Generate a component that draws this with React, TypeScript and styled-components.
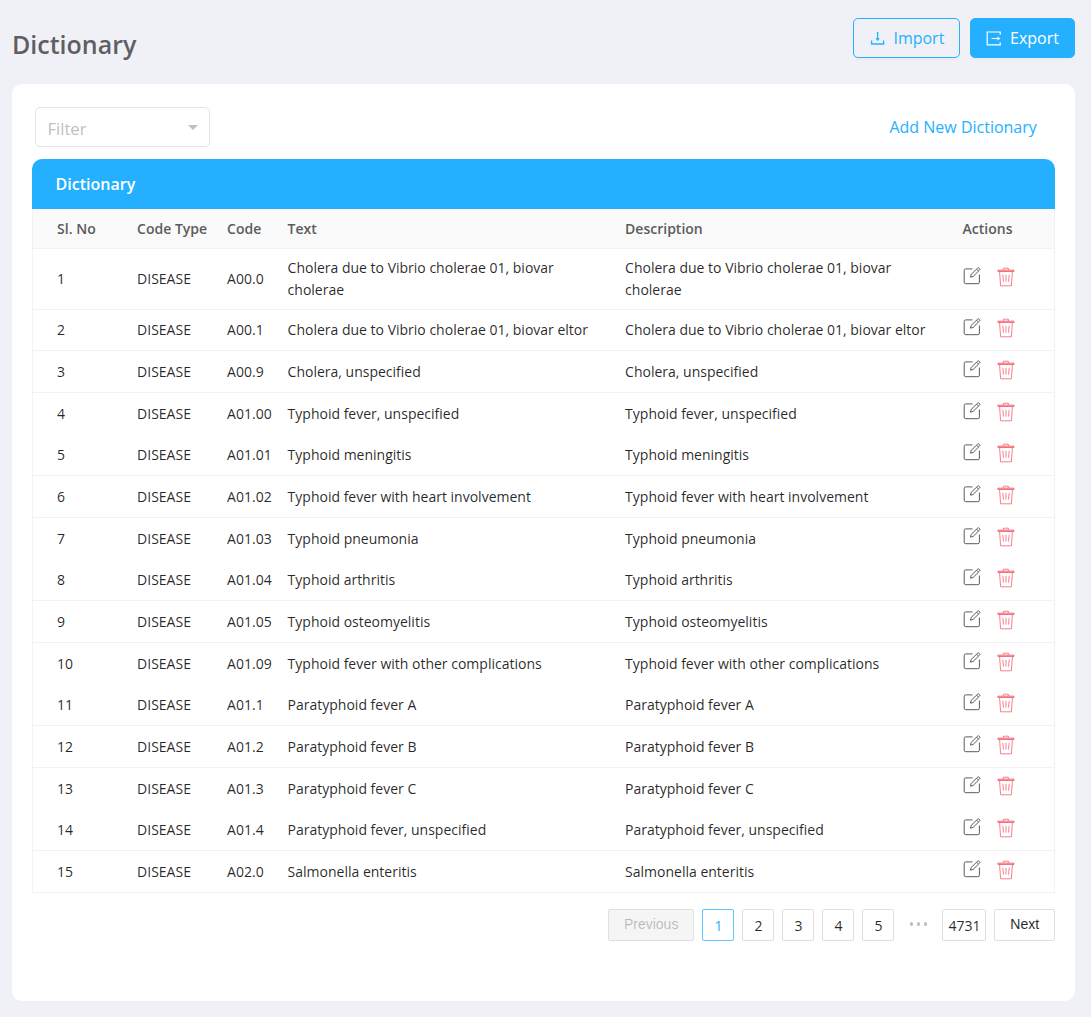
import React from "react";
import styled, { createGlobalStyle } from "styled-components";

const GlobalStyle = createGlobalStyle`
  *, *::before, *::after { box-sizing: border-box; }
  body {
    margin: 0;
    background: #f0f1f6;
    font-family: "Open Sans", sans-serif;
    font-size: 14px;
    color: rgba(0, 0, 0, 0.85);
  }
`;

const Page = styled.main`
  display: flex;
  flex-direction: column;
  height: 1017px;
  padding: 18px 16px 16px 12px;
`;

const TopBar = styled.header`
  display: flex;
  justify-content: space-between;
  height: 66px;
`;

const Title = styled.h1`
  margin: 8px 0 0;
  font-size: 25px;
  font-weight: 600;
  line-height: 36px;
  color: #5f5f63;
`;

const ButtonGroup = styled.div`
  display: flex;
  gap: 10px;
`;

const ActionButton = styled.button<{ $primary?: boolean }>`
  display: flex;
  align-items: center;
  gap: 8px;
  width: ${(p) => (p.$primary ? "105px" : "106.6px")};
  height: 40px;
  padding: 0 14px 0 15px;
  border: 1px solid #25b0ff;
  border-radius: 5px;
  background: ${(p) => (p.$primary ? "#25b0ff" : "transparent")};
  color: ${(p) => (p.$primary ? "#fff" : "#25b0ff")};
  box-shadow: 0 2px 0 rgba(0, 0, 0, 0.02);
  font: 400 16px/22px "Open Sans", sans-serif;
`;

const Card = styled.section`
  flex: 1;
  padding: 23px 20px 0;
  border-radius: 10px;
  background: #fff;
`;

const Toolbar = styled.div`
  display: flex;
  justify-content: space-between;
  height: 52px;
  padding: 0 18.2px 0 3px;
`;

const Filter = styled.div`
  display: flex;
  align-items: center;
  justify-content: space-between;
  width: 175.4px;
  height: 40px;
  padding: 3px 11px 0 11.5px;
  border: 1px solid #e3e3e3;
  border-radius: 5px;
  color: #bfbfbf;
  font-size: 16.6px;
`;

const Caret = styled.span`
  margin-bottom: 2px;
  border: 4.5px solid transparent;
  border-width: 5px 5px 0;
  border-top-color: #bfbfbf;
`;

const AddLink = styled.a`
  padding-top: 9px;
  color: #25b0ff;
  font-size: 16px;
  line-height: 22px;
`;

const TableTitle = styled.div`
  height: 50px;
  padding-left: 23.6px;
  border-radius: 10px 10px 0 0;
  background: #25b0ff;
  color: #fff;
  font-size: 16px;
  font-weight: 600;
  line-height: 50px;
`;

const Table = styled.div`
  border: 1px solid #f2f2f2;
  border-width: 0 1px;
`;

const Row = styled.div<{ $height: number; $head?: boolean; $plain?: boolean }>`
  display: grid;
  grid-template-columns: 80px 90px 60.5px 337.5px 337.5px 1fr;
  align-items: center;
  height: ${(p) => p.$height}px;
  padding: ${(p) => (p.$head ? "0" : "0.9px")} 0 0 24.1px;
  border-bottom: 1px solid ${(p) => (p.$plain ? "transparent" : "#f2f2f2")};
  background: ${(p) => (p.$head ? "#fafafa" : "#fff")};
  color: ${(p) => (p.$head ? "#5c5c5c" : "rgba(0, 0, 0, 0.85)")};
  font-weight: ${(p) => (p.$head ? 600 : 400)};
  line-height: 22px;
`;

const Cell = styled.span`
  padding-right: 16px;
`;

const Code = styled.span`
  white-space: nowrap;
`;

const Actions = styled.span`
  display: flex;
  gap: 16px;
  padding: 0 0 4.2px 0.4px;
`;

const Pagination = styled.nav`
  display: flex;
  justify-content: flex-end;
  gap: 8px;
  margin-top: 16px;
`;

const PageButton = styled.button<{ $width: number; $active?: boolean; $step?: boolean }>`
  width: ${(p) => p.$width}px;
  height: 32px;
  padding: ${(p) => (p.$step ? "0 0 1px" : "2px 0 0")};
  border: 1px solid ${(p) => (p.$active ? "#5cc4ff" : "#e0e0e0")};
  border-radius: 2px;
  background: #fff;
  color: ${(p) => (p.$active ? "#25b0ff" : "rgba(0, 0, 0, 0.85)")};
  font: 400 14px/22px ${(p) => (p.$step ? '"Liberation Sans"' : '"Open Sans"')}, sans-serif;

  &:disabled {
    background: #f5f5f5;
    color: rgba(0, 0, 0, 0.25);
  }
`;

const Ellipsis = styled.span`
  display: flex;
  align-items: center;
  justify-content: center;
  gap: 3.4px;
  width: 32px;
  height: 31px;
`;

const Dot = styled.i`
  width: 3.6px;
  height: 3.6px;
  border-radius: 50%;
  background: #bfbfbf;
`;

const ImportIcon = () => (
  <svg width="16" height="16" viewBox="64 64 896 896" fill="currentColor">
    <path
      transform="translate(34 22)"
      d="M505.7 661a8 8 0 0 0 12.6 0l112-141.7c4.1-5.2.4-12.9-6.3-12.9h-74.1V168c0-4.4-3.6-8-8-8h-60c-4.4 0-8 3.6-8 8v338.3H400c-6.7 0-10.4 7.7-6.3 12.9l112 141.8zM878 626h-60c-4.4 0-8 3.6-8 8v154H214V634c0-4.4-3.6-8-8-8h-60c-4.4 0-8 3.6-8 8v198c0 17.7 14.3 32 32 32h684c17.7 0 32-14.3 32-32V634c0-4.4-3.6-8-8-8z"
    />
  </svg>
);

const ExportIcon = () => (
  <svg width="16" height="16" viewBox="0 0 16 16" fill="none" stroke="currentColor" strokeWidth="1.2">
    <path d="M14.2 4.7V2H1.2v12.9h13v-2.7M5.6 8.5h6.4" />
    <path d="m11.4 6.4 3 2.1-3 2.1Z" fill="currentColor" stroke="none" />
  </svg>
);

const EditIcon = () => (
  <svg width="18" height="18" viewBox="0 0 18 18" fill="none" stroke="#5c5c5c" strokeWidth="1">
    <path d="M9.5 1.9H2.8a1.6 1.6 0 0 0-1.6 1.6v11.6a1.6 1.6 0 0 0 1.6 1.6h12a1.6 1.6 0 0 0 1.6-1.6V7.6" />
    <path d="m7.5 10.2.7-2.8 6.5-6.3a.9.9 0 0 1 1.3 0l.6.6a.9.9 0 0 1 0 1.3l-6.4 6.4ZM13.6 2.2l1.9 1.9" />
  </svg>
);

const TrashIcon = () => (
  <svg width="18" height="20" viewBox="0 0 18 20" fill="none" stroke="#f5606f" strokeWidth="0.8">
    <path d="M.9 3.2h16.1v1.2H.9Z" strokeWidth="1" />
    <path d="M6.4 2.9V1.2h5v1.7M2.6 4.8l1 14h10.8l1-14M5.8 7.8l.7 6.8M9 7.8v6.8M12.2 7.8l-.7 6.8" />
  </svg>
);

const records: [string, string][] = [
  ["A00.0", "Cholera due to Vibrio cholerae 01, biovar cholerae"],
  ["A00.1", "Cholera due to Vibrio cholerae 01, biovar eltor"],
  ["A00.9", "Cholera, unspecified"],
  ["A01.00", "Typhoid fever, unspecified"],
  ["A01.01", "Typhoid meningitis"],
  ["A01.02", "Typhoid fever with heart involvement"],
  ["A01.03", "Typhoid pneumonia"],
  ["A01.04", "Typhoid arthritis"],
  ["A01.05", "Typhoid osteomyelitis"],
  ["A01.09", "Typhoid fever with other complications"],
  ["A01.1", "Paratyphoid fever A"],
  ["A01.2", "Paratyphoid fever B"],
  ["A01.3", "Paratyphoid fever C"],
  ["A01.4", "Paratyphoid fever, unspecified"],
  ["A02.0", "Salmonella enteritis"],
];

const headings = ["Sl. No", "Code Type", "Code", "Text", "Description", "Actions"];

export default function App() {
  return (
    <Page>
      <GlobalStyle />
      <TopBar>
        <Title>Dictionary</Title>
        <ButtonGroup>
          <ActionButton><ImportIcon />Import</ActionButton>
          <ActionButton $primary><ExportIcon />Export</ActionButton>
        </ButtonGroup>
      </TopBar>
      <Card>
        <Toolbar>
          <Filter>Filter<Caret /></Filter>
          <AddLink>Add New Dictionary</AddLink>
        </Toolbar>
        <TableTitle>Dictionary</TableTitle>
        <Table>
          <Row $head $height={40}>
            {headings.map((h) => <Code key={h}>{h}</Code>)}
          </Row>
          {records.map(([code, text], i) => (
            <Row key={code} $height={i === 0 ? 60.6 : 41.67} $plain={i > 0 && i % 3 === 0}>
              <Cell>{i + 1}</Cell>
              <Cell>DISEASE</Cell>
              <Code>{code}</Code>
              <Cell>{text}</Cell>
              <Cell>{text}</Cell>
              <Actions><EditIcon /><TrashIcon /></Actions>
            </Row>
          ))}
        </Table>
        <Pagination>
          <PageButton $width={86.5} $step disabled>Previous</PageButton>
          <PageButton $width={32} $active>1</PageButton>
          {[2, 3, 4, 5].map((n) => <PageButton key={n} $width={32}>{n}</PageButton>)}
          <Ellipsis><Dot /><Dot /><Dot /></Ellipsis>
          <PageButton $width={44}>4731</PageButton>
          <PageButton $width={60.6} $step>Next</PageButton>
        </Pagination>
      </Card>
    </Page>
  );
}
